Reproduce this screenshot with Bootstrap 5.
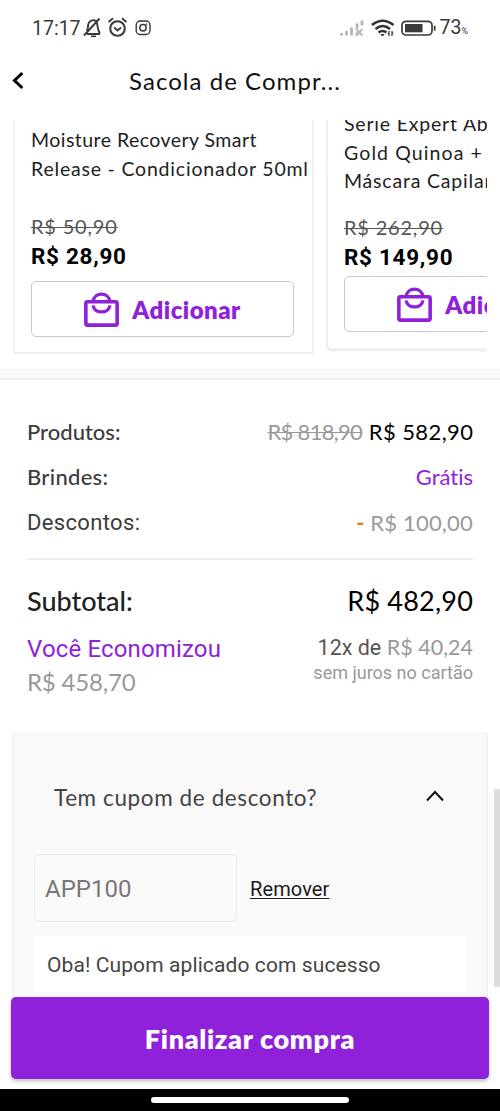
<!DOCTYPE html>
<html lang="pt-BR">
<head>
<meta charset="utf-8">
<meta name="viewport" content="width=device-width, initial-scale=1">
<title>Sacola de Compras</title>
<link href="https://cdn.jsdelivr.net/npm/bootstrap@5.3.0/dist/css/bootstrap.min.css" rel="stylesheet">
<style>
  :root { --brand: #9021da; }
  body { font-family: Lato, "Liberation Sans", sans-serif; color: #222; background: #fff; font-variant-ligatures: none; }
  .screen { width: 500px; height: 1111px; }
  .rb { font-family: Roboto, "Liberation Sans", sans-serif; }
  .brand-text { color: var(--brand); }
  .txt-dark { color: #3c3c3c; }
  .txt-grey { color: #999; }
  .status { height: 56px; padding: 0 32px 0 32px; color: #3a3a3a; }
  .clock { font-size: 19.5px; line-height: 57px; }
  .battery-level { line-height: 20px; padding-top: 3px; margin-left: 2px; }
  .battery-level span { font-size: 9px; }
  .topbar { height: 64px; }
  .topbar svg { margin: 15px 0 0 12px; }
  .topbar h1 { font-size: 24px; line-height: 49px; letter-spacing: 1.05px; color: #111; margin-left: 105px; }
  .shelf { height: 249px; padding-left: 13px; margin-right: 13px; gap: 12px; }
  .item { width: 301px; border: 2px solid #f0f0f0; border-top: 0; padding: 6px 0 0 16px; }
  .item-a { height: 234px; }
  .item-b { height: 230px; border-radius: 0 0 5px 5px; padding-top: 0; box-shadow: 0 1px 2px #e8e8e8; }
  .item-name { font-size: 19.5px; line-height: 28.6px; letter-spacing: .8px; height: 57px; margin-bottom: 29px; white-space: nowrap; }
  .item-a .item-name .row-one { letter-spacing: .45px; }
  .item-b .item-name { height: 86px; margin-top: -10px; margin-bottom: 17px; }
  .item-b .row-two { letter-spacing: 1.1px; }
  .was { font-size: 20px; line-height: 28px; color: #555; letter-spacing: .8px; }
  .was s, .was-total { text-decoration-thickness: 1px; }
  .now { font-size: 22.5px; line-height: 30px; font-weight: 700; color: #000; letter-spacing: .7px; margin-top: 1px; }
  .add { width: 263px; height: 56px; border: 1px solid #c9c9c9; border-radius: 5px; margin-top: 10px; gap: 13px; font-size: 24px; font-weight: 800; letter-spacing: .45px; color: var(--brand); }
  .add .t { padding-top: 2px; }
  .item-b .add { margin-top: 4px; }
  .band { height: 11px; background: #f8f8f8; border-bottom: 2px solid #eee; }
  .summary { height: 351px; padding: 28px 27px 0 27px; }
  .line { height: 45.3px; line-height: 48px; font-size: 22px; }
  .medium { font-weight: 500; }
  .was-total { letter-spacing: -.7px; margin-right: 1px; }
  .v1 { letter-spacing: .4px; margin-right: -.4px; }
  .rule { height: 2px; background: #eee; margin: 14px 0 17px; }
  .total { height: 46px; line-height: 47px; font-size: 27px; }
  .total .v4 { letter-spacing: .2px; }
  .saved { font-size: 24px; line-height: 33px; margin-top: 9px; }
  .saved .rb { letter-spacing: .15px; padding-top: 1px; height: 33px; }
  .saved .v5 { letter-spacing: -.2px; }
  .parcel { font-size: 21.5px; line-height: 25px; margin-top: 12px; text-align: right; }
  .parcel-note { font-size: 18px; }
  .coupon { width: 476px; height: 290px; margin-left: 12px; background: #f9f9f9; border-radius: 5px; border: 0 solid #f1f1f1; border-width: 0 2px; padding: 37px 0 0 20px; }
  .coupon-head { height: 60px; padding: 0 42px 0 20px; font-size: 22.5px; letter-spacing: .6px; color: #444; }
  .coupon-head svg { margin-top: -4px; }
  .code-row { margin-top: 26px; }
  .code { width: 203px; height: 68px; border: 1.5px solid #ececec; border-radius: 5px; padding: 2px 0 0 10px; font-size: 24px; color: #777; background: #fafafa; }
  .remove { font-size: 20px; color: #1a1a1a; margin-left: 13px; padding-top: 2px; letter-spacing: .1px; text-underline-offset: 2px; text-decoration-thickness: 1px; }
  .ok { width: 433px; height: 56px; margin-top: 14px; background: #fff; padding-left: 13px; font-size: 21px; line-height: 58px; letter-spacing: .1px; color: #444; }
  .dock { bottom: 0; height: 115px; padding: 1px 11px 0; background: linear-gradient(transparent 81px, #fff 81px); }
  .checkout { height: 82px; background: var(--brand); border-radius: 5px; color: #fff; font-size: 27px; font-weight: 800; letter-spacing: .65px; padding-top: 2px; box-shadow: 0 2px 4px #bbb; }
  .sysbar { height: 22px; background: #000; bottom: 0; }
  .pill { width: 198px; height: 6px; background: #fff; }
  .thumb { right: 0; top: 789px; width: 6px; height: 198px; background: #ddd; }
  .t { display: inline-block; white-space: nowrap; }
</style>
</head>
<body>
<div class="screen position-relative overflow-hidden">
  <header class="status d-flex align-items-center justify-content-between rb">
    <div class="d-flex align-items-center">
      <span class="clock">17:17</span>
      <svg width="71" height="22" viewBox="0 0 71 22" fill="none" stroke="#3a3a3a" stroke-width="1.9">
        <path d="M6 17h13M5.500 14.500c2-2 1-5 2-8 1-3 6-4.500 8-2 1.500 4 .5 8 3.500 12M3 18.500 18.500 1.500"/><path d="M10 19.300h5" stroke-width="1.600"/>
        <circle cx="36.500" cy="11.500" r="7.300" stroke-width="2.100"/><path d="M33.300 10.500l3.200 3 3.600-3M27.500 5l4.500-3.700M41 1.300l4.500 3.700"/>
        <rect x="55.200" y="4" width="13.800" height="13.500" rx="4" stroke-width="1.400"/><circle cx="62" cy="10.800" r="3.200" stroke-width="1.500"/><circle cx="65.700" cy="7.200" r=".5" stroke-width=".9"/>
      </svg>
    </div>
    <div class="d-flex align-items-center">
      <svg width="98" height="22" viewBox="0 0 98 22">
        <g stroke="#b5b5b5" stroke-width="2.800"><path d="M2.500 18.500v-2.500M7.500 18.500v-4.500M12.500 18.500V10.500M18 11.500V6.500M23 8.500V3.500M18 18.500v-3"/><path d="M17 12l6.500 6.500M23.500 12l-6.500 6.500" stroke-width="1.800"/></g>
        <g fill="none" stroke="#333" stroke-width="2.600"><path d="M33 8q10.500-8.500 21.500 0M36.500 12q7.200-6 14.500 0M39.500 15.500q4-3 8 0"/><path d="M42 17.500l1.500 1.500L45 17.500z" fill="#333" stroke-width="1"/><path d="M50 14v5M53 14v5M48.500 16.500h2M52.500 16h2" stroke-width="1.200"/></g>
        <rect x="63" y="4.300" width="30" height="13.700" rx="4" fill="none" stroke="#3a3a3a" stroke-width="1.700"/><rect x="66" y="7" width="17.500" height="8.300" fill="#3a3a3a"/><path d="M95.700 8.700v5" stroke="#3a3a3a" stroke-width="1.700"/>
      </svg>
      <span class="clock battery-level">73<span>%</span></span>
    </div>
  </header>
  <div class="topbar d-flex align-items-start">
    <svg width="12" height="19" viewBox="0 0 12 19" fill="none" stroke="#000" stroke-width="3"><path d="M10.300 2 2.500 9.500l7.800 7.500"/></svg>
    <h1 class="mb-0 fw-normal t">Sacola de Compr...</h1>
  </div>

  <section class="shelf d-flex overflow-hidden">
    <article class="item item-a flex-shrink-0">
      <div class="item-name"><span class="row-one">Moisture Recovery Smart</span><br>Release - Condicionador 50ml</div>
      <div class="was"><s class="t">R$ 50,90</s></div>
      <div class="now rb"><span class="t">R$ 28,90</span></div>
      <div class="add d-flex align-items-center justify-content-center">
        <svg width="35" height="35" viewBox="0 0 34 34" fill="none" stroke="#9021da" stroke-width="3.500"><rect x="1.800" y="9.500" width="30.400" height="22.700" rx="1.500"/><path d="M8.800 9.500c1-10 15.400-10 16.400 0M8.800 13c1 8.500 15.400 8.500 16.400 0" stroke-width="3.200"/></svg>
        <span class="t">Adicionar</span>
      </div>
    </article>
    <article class="item item-b flex-shrink-0">
      <div class="item-name">Série Expert Ab<br><span class="row-two">Gold Quinoa +</span><br>Máscara Capilar</div>
      <div class="was"><s class="t">R$ 262,90</s></div>
      <div class="now rb"><span class="t">R$ 149,90</span></div>
      <div class="add d-flex align-items-center justify-content-center">
        <svg width="35" height="35" viewBox="0 0 34 34" fill="none" stroke="#9021da" stroke-width="3.500"><rect x="1.800" y="9.500" width="30.400" height="22.700" rx="1.500"/><path d="M8.800 9.500c1-10 15.400-10 16.400 0M8.800 13c1 8.500 15.400 8.500 16.400 0" stroke-width="3.200"/></svg>
        <span class="t">Adicionar</span>
      </div>
    </article>
  </section>
  <div class="band"></div>

  <section class="summary">
    <div class="line d-flex justify-content-between"><span class="txt-dark medium">Produtos:</span><span><s class="txt-grey t was-total">R$ 818,90</s> <span class="text-black t v1">R$ 582,90</span></span></div>
    <div class="line d-flex justify-content-between"><span class="txt-dark medium" style="letter-spacing:.3px">Brindes:</span><span class="brand-text t">Grátis</span></div>
    <div class="line d-flex justify-content-between"><span class="txt-dark rb" style="letter-spacing:.35px">Descontos:</span><span><span class="fw-bold" style="color:#e87722">-</span> <span class="txt-grey t" style="letter-spacing:.2px">R$ 100,00</span></span></div>
    <div class="rule"></div>
    <div class="total d-flex justify-content-between"><span class="medium">Subtotal:</span><span class="text-black v4">R$ 482,90</span></div>
    <div class="d-flex justify-content-between">
      <div class="saved"><div class="brand-text rb">Você Economizou</div><div class="txt-grey v5">R$ 458,70</div></div>
      <div class="parcel"><div><span class="rb" style="color:#555">12x de</span> <span class="txt-grey">R$ 40,24</span></div><div class="rb txt-grey parcel-note">sem juros no cartão</div></div>
    </div>
  </section>

  <section class="coupon">
    <div class="coupon-head d-flex align-items-center justify-content-between"><span class="t">Tem cupom de desconto?</span>
      <svg width="18" height="12" viewBox="0 0 18 12" fill="none" stroke="#111" stroke-width="2"><path d="M1 10.500 9 2l8 8.500"/></svg>
    </div>
    <div class="code-row d-flex align-items-center rb"><div class="code d-flex align-items-center">APP100</div><u class="remove">Remover</u></div>
    <div class="ok rb">Oba! Cupom aplicado com sucesso</div>
  </section>

  <div class="thumb position-absolute"></div>
  <div class="dock position-absolute w-100"><div class="checkout d-flex align-items-center justify-content-center"><span class="t">Finalizar compra</span></div></div>
  <div class="sysbar position-absolute w-100 d-flex align-items-center justify-content-center"><div class="pill rounded-pill"></div></div>
</div>
<script src="https://cdn.jsdelivr.net/npm/bootstrap@5.3.0/dist/js/bootstrap.bundle.min.js"></script>
</body>
</html>
